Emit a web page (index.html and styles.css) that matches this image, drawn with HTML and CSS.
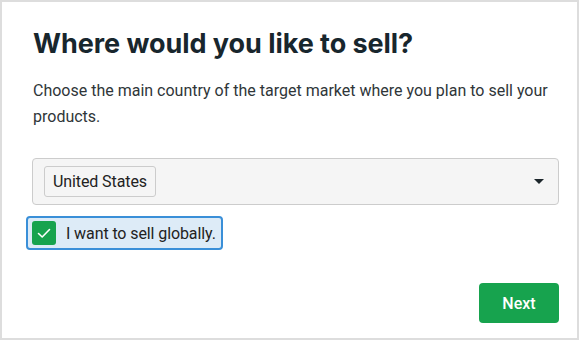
FILE: index.html
```html
<!DOCTYPE html>
<html lang="en">
<head>
<meta charset="utf-8">
<title>Where would you like to sell?</title>
<link rel="stylesheet" href="styles.css">
</head>
<body>
<div class="card">
  <h1 class="title">Where would you like to sell?</h1>
  <p class="desc">Choose the main country of the target market where you plan to sell your products.</p>
  <div class="select">
    <span class="chip">United States</span>
    <span class="caret"></span>
  </div>
  <label class="check">
    <span class="box">
      <svg width="16" height="16" viewBox="0 0 16 16"><path d="M2.5 8.5 L6.2 12 L13.5 4.5" fill="none" stroke="#fff" stroke-width="1.6" stroke-linecap="round" stroke-linejoin="round"/></svg>
    </span>
    <span class="check-label">I want to sell globally.</span>
  </label>
  <div class="actions">
    <button class="next">Next</button>
  </div>
</div>
</body>
</html>
```

FILE: styles.css
```css
html, body {
  margin: 0;
  padding: 0;
  background: #fff;
}
.card {
  box-sizing: border-box;
  width: 579px;
  height: 340px;
  border: 2px solid #dddddd;
  padding: 22px 18px 15px 30px;
  display: flex;
  flex-direction: column;
  font-family: Roboto, "Liberation Sans", sans-serif;
  color: #2b3338;
}
.title {
  margin: 0;
  font-family: Inter, "Noto Sans", sans-serif;
  font-weight: 700;
  font-size: 27px;
  line-height: 40px;
  color: #18262d;
  padding-left: 1px;
  letter-spacing: -0.05px;
}
.desc {
  margin: 14px 0 0 1px;
  font-size: 16px;
  line-height: 26px;
  color: #2f3639;
}
.select {
  margin-top: 28px;
  box-sizing: border-box;
  height: 47px;
  border: 1px solid #cccccc;
  border-radius: 4px;
  background: #f5f5f5;
  display: flex;
  align-items: center;
  padding: 0 14px 0 11px;
}
.chip {
  box-sizing: border-box;
  height: 31px;
  padding: 0 8px;
  border: 1px solid #cccccc;
  border-radius: 3px;
  background: #f5f5f5;
  font-size: 16px;
  line-height: 29px;
  color: #222;
  letter-spacing: -0.1px;
}
.caret {
  margin-left: auto;
  width: 0;
  height: 0;
  border-left: 5px solid transparent;
  border-right: 5px solid transparent;
  border-top: 5px solid #1c262b;
}
.check {
  margin: 11px 0 0 -6px;
  align-self: flex-start;
  box-sizing: border-box;
  height: 34px;
  border: 2px solid #3a8fd8;
  border-radius: 4px;
  background: #ddebf7;
  display: flex;
  align-items: center;
  padding: 0 5px 0 4px;
  gap: 10px;
}
.box {
  width: 24px;
  height: 24px;
  border-radius: 3px;
  background: #17a34e;
  display: flex;
  align-items: center;
  justify-content: center;
}
.check-label {
  font-size: 16px;
  color: #222;
  letter-spacing: -0.1px;
}
.actions {
  margin-top: auto;
  display: flex;
  justify-content: flex-end;
}
.next {
  width: 80px;
  height: 40px;
  border: none;
  border-radius: 4px;
  background: #17a34e;
  color: #fff;
  font-family: Roboto, "Liberation Sans", sans-serif;
  font-weight: 500;
  font-size: 16px;
}
```
